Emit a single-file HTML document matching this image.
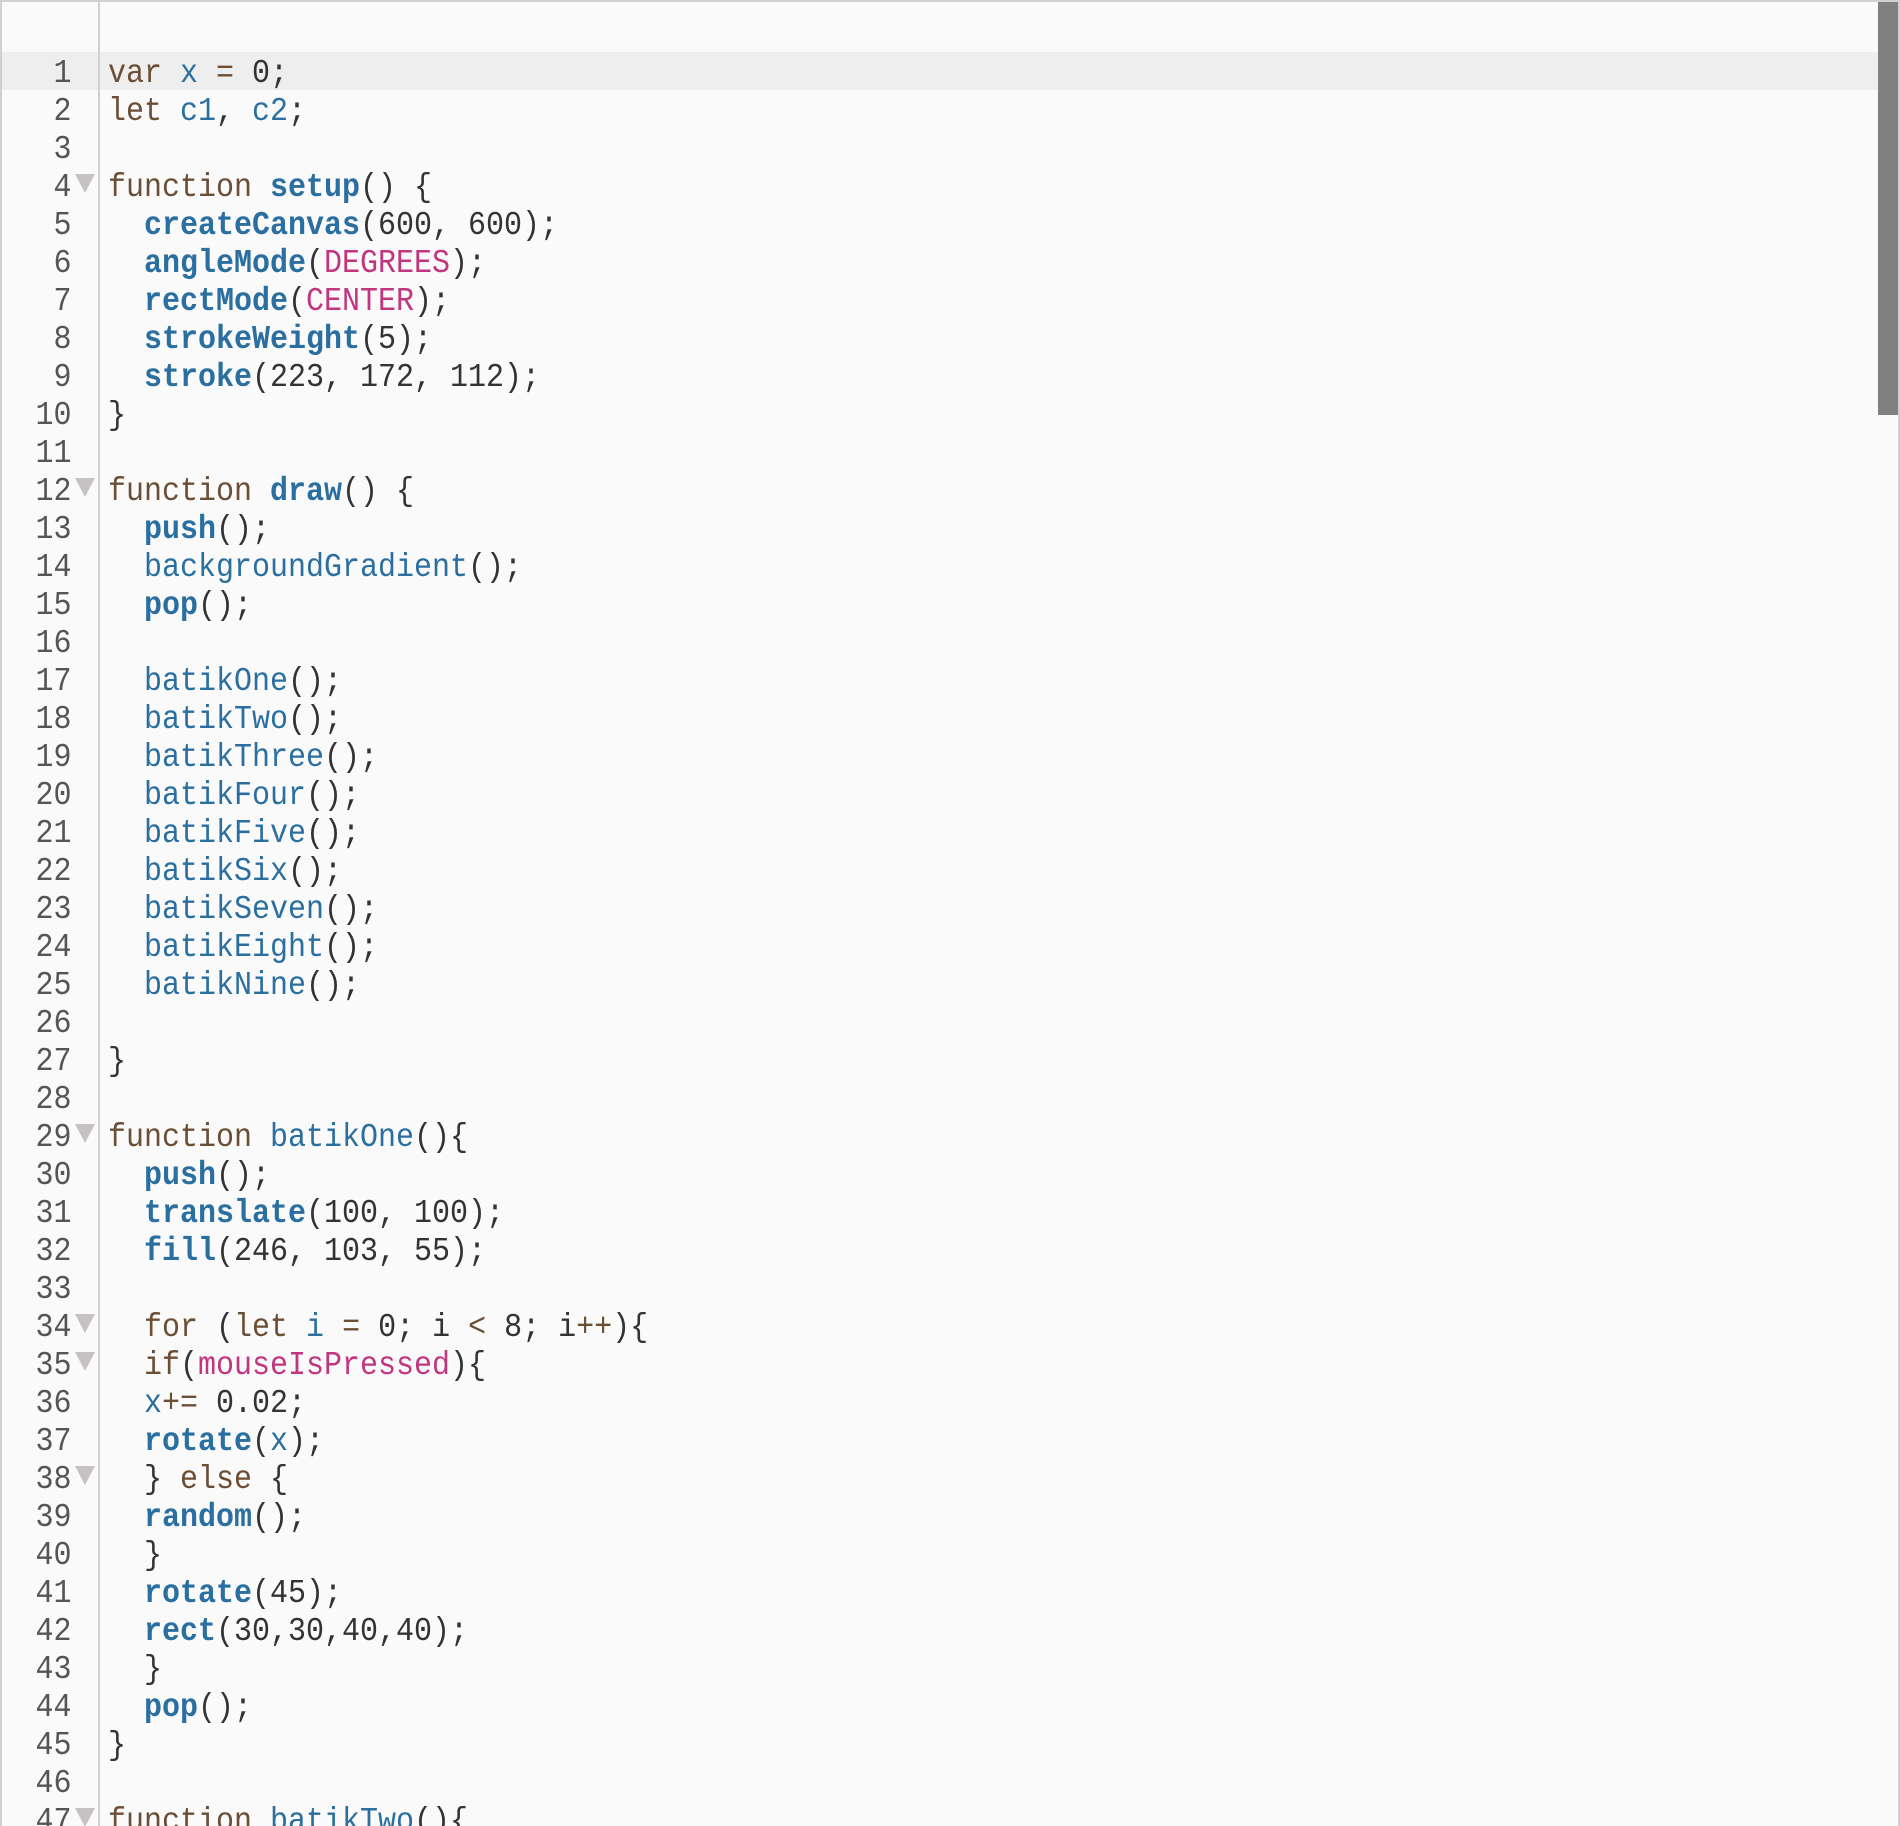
<!DOCTYPE html>
<html><head><meta charset="utf-8"><style>
html,body{margin:0;padding:0;background:#fafafa}
#w{position:relative;width:1900px;height:1826px;overflow:hidden;background:#fafafa}
.a{position:absolute}
pre{margin:0;font:33px/38px "Liberation Mono",monospace;color:#333;position:absolute;top:54.5px}
#n{left:0;width:71.5px;text-align:right;color:#555;transform:scaleX(.909);transform-origin:100% 0}
#c{left:108px;transform:scaleX(.909);transform-origin:0 0}
i{font-style:normal;color:#6b4f35}
u{text-decoration:none;color:#2a6f9f}
b{font-weight:bold;color:#2a6f9f}
s{text-decoration:none;color:#c2357f}
.t{position:absolute;left:75px;width:0;height:0;border-left:10px solid transparent;border-right:10px solid transparent;border-top:19px solid #c6c2c2}
</style></head><body><div id="w">
<div class="a" style="left:2px;top:52px;width:1876px;height:38px;background:#eee"></div>
<div class="a" style="left:98px;top:2px;width:2px;height:1824px;background:#d0d0d0"></div>
<pre id="n">1
2
3
4
5
6
7
8
9
10
11
12
13
14
15
16
17
18
19
20
21
22
23
24
25
26
27
28
29
30
31
32
33
34
35
36
37
38
39
40
41
42
43
44
45
46
47</pre>
<pre id="c"><i>var</i> <u>x</u> <i>=</i> 0;
<i>let</i> <u>c1</u>, <u>c2</u>;

<i>function</i> <b>setup</b>() {
  <b>createCanvas</b>(600, 600);
  <b>angleMode</b>(<s>DEGREES</s>);
  <b>rectMode</b>(<s>CENTER</s>);
  <b>strokeWeight</b>(5);
  <b>stroke</b>(223, 172, 112);
}

<i>function</i> <b>draw</b>() {
  <b>push</b>();
  <u>backgroundGradient</u>();
  <b>pop</b>();

  <u>batikOne</u>();
  <u>batikTwo</u>();
  <u>batikThree</u>();
  <u>batikFour</u>();
  <u>batikFive</u>();
  <u>batikSix</u>();
  <u>batikSeven</u>();
  <u>batikEight</u>();
  <u>batikNine</u>();

}

<i>function</i> <u>batikOne</u>(){
  <b>push</b>();
  <b>translate</b>(100, 100);
  <b>fill</b>(246, 103, 55);

  <i>for</i> (<i>let</i> <u>i</u> <i>=</i> 0; i <i>&lt;</i> 8; i<i>++</i>){
  <i>if</i>(<s>mouseIsPressed</s>){
  <u>x</u><i>+=</i> 0.02;
  <b>rotate</b>(<u>x</u>);
  } <i>else</i> {
  <b>random</b>();
  }
  <b>rotate</b>(45);
  <b>rect</b>(30,30,40,40);
  }
  <b>pop</b>();
}

<i>function</i> <u>batikTwo</u>(){</pre>
<div class="t" style="top:174px"></div>
<div class="t" style="top:478px"></div>
<div class="t" style="top:1124px"></div>
<div class="t" style="top:1314px"></div>
<div class="t" style="top:1352px"></div>
<div class="t" style="top:1466px"></div>
<div class="t" style="top:1808px"></div>
<div class="a" style="left:1878px;top:2px;width:20px;height:413px;background:#808080"></div>
<div class="a" style="left:0;top:0;width:1900px;height:2px;background:#d0d0d0"></div>
<div class="a" style="left:0;top:0;width:2px;height:1826px;background:#d0d0d0"></div>
<div class="a" style="left:1898px;top:0;width:2px;height:1826px;background:#d0d0d0"></div>
</div></body></html>
